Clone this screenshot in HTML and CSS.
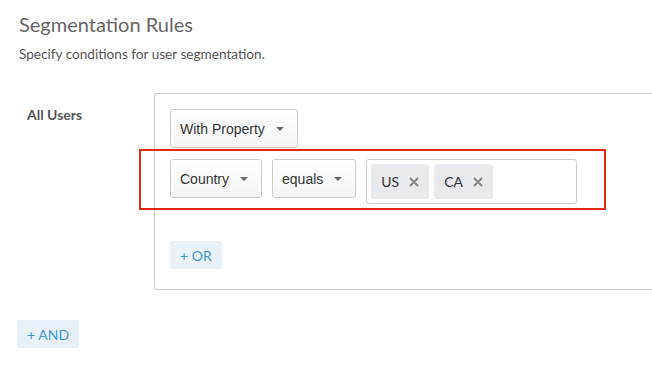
FILE: index.html
```html
<!DOCTYPE html>
<html lang="en">
<head>
    <meta charset="UTF-8">
    <meta name="viewport" content="width=device-width, initial-scale=1.0">
    <title>Segmentation Rules</title>
    <link rel="stylesheet" href="styles.css">
</head>
<body>
    <div class="page">
        <h1>Segmentation Rules</h1>
        <p class="subtitle">Specify conditions for user segmentation.</p>

        <div class="rule">
            <div class="rule-label">All Users</div>
            <div class="panel">
                <div class="row">
                    <button class="select">With Property <span class="caret"></span></button>
                </div>
                <div class="row condition">
                    <div class="highlight"></div>
                    <button class="select">Country <span class="caret"></span></button>
                    <button class="select">equals <span class="caret"></span></button>
                    <div class="tags">
                        <span class="tag">US
                            <svg class="remove" width="10" height="10" viewBox="0 0 10 10"><path d="M1 1L9 9M9 1L1 9"/></svg>
                        </span>
                        <span class="tag">CA
                            <svg class="remove" width="10" height="10" viewBox="0 0 10 10"><path d="M1 1L9 9M9 1L1 9"/></svg>
                        </span>
                    </div>
                </div>
                <button class="add-btn or-btn">+ OR</button>
            </div>
        </div>

        <button class="add-btn and-btn">+ AND</button>
    </div>
</body>
</html>
```

FILE: styles.css
```css
body {
    margin: 0;
    background: #fff;
    font-family: Lato, "Open Sans", sans-serif;
    overflow: hidden;
}

.page {
    padding: 12px 0 0 19px;
    overflow: hidden;
}

h1 {
    margin: 0;
    font-size: 20px;
    font-weight: 400;
    color: #666;
    line-height: 24px;
}

.subtitle {
    margin: 10px 0 0;
    font-size: 13.6px;
    color: #555;
    line-height: 16px;
}

.rule {
    display: flex;
    margin-top: 31px;
}

.rule-label {
    flex-shrink: 0;
    width: 135px;
    padding: 13px 0 0 8px;
    box-sizing: border-box;
    font-size: 14px;
    font-weight: 700;
    color: #555;
}

.panel {
    width: 520px;
    flex-shrink: 0;
    border: 1px solid #ccc;
    border-right: none;
    border-radius: 3px 0 0 3px;
    padding: 15px 15px 20px;
}

.row {
    display: flex;
    gap: 10px;
    align-items: flex-start;
}

.condition {
    position: relative;
    margin-top: 11px;
}

.highlight {
    position: absolute;
    left: -31px;
    top: -10px;
    width: 467px;
    height: 61px;
    box-sizing: border-box;
    border: 2px solid #e0290f;
}

.select {
    display: flex;
    align-items: center;
    height: 39px;
    padding: 0 13px 0 9px;
    border: 1px solid #ccc;
    border-radius: 3px;
    background: linear-gradient(#fff, #f3f5f7);
    font-family: "Liberation Sans", Arial, sans-serif;
    font-size: 14px;
    color: #333;
}

.caret {
    display: inline-block;
    margin-left: 11px;
    border-left: 4px solid transparent;
    border-right: 4px solid transparent;
    border-top: 4px solid #666;
}

.tags {
    display: flex;
    gap: 5px;
    width: 211px;
    height: 45px;
    box-sizing: border-box;
    padding: 4px;
    border: 1px solid #ccc;
    border-radius: 3px;
}

.tag {
    display: flex;
    align-items: center;
    height: 35px;
    padding: 0 10px;
    border-radius: 3px;
    background: #e8eaed;
    font-size: 14px;
    color: #333;
}

.remove {
    margin-left: 10px;
    stroke: #888;
    stroke-width: 2;
}

.add-btn {
    display: block;
    height: 28px;
    padding: 0 10px;
    border: none;
    border-radius: 3px;
    background: #e9f1f8;
    font-family: Lato, "Open Sans", sans-serif;
    font-size: 14px;
    color: #3b9ad0;
}

.or-btn {
    margin-top: 37px;
}

.and-btn {
    margin: 30px 0 0 -2px;
}
```
